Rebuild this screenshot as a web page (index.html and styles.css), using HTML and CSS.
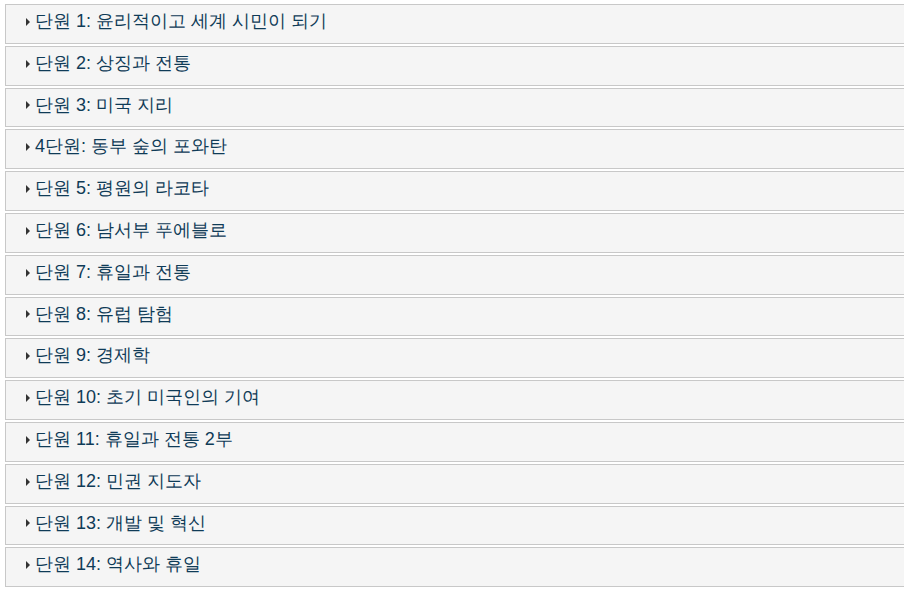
FILE: index.html
```html
<!DOCTYPE html>
<html lang="ko">
<head>
<meta charset="utf-8">
<title>단원</title>
<link rel="stylesheet" href="styles.css">
</head>
<body>
<div class="list">
  <details class="unit"><summary class="unit-title"><span class="arrow"></span>단원 1: 윤리적이고 세계 시민이 되기</summary></details>
  <details class="unit"><summary class="unit-title"><span class="arrow"></span>단원 2: 상징과 전통</summary></details>
  <details class="unit"><summary class="unit-title"><span class="arrow"></span>단원 3: 미국 지리</summary></details>
  <details class="unit"><summary class="unit-title"><span class="arrow"></span>4단원: 동부 숲의 포와탄</summary></details>
  <details class="unit"><summary class="unit-title"><span class="arrow"></span>단원 5: 평원의 라코타</summary></details>
  <details class="unit"><summary class="unit-title"><span class="arrow"></span>단원 6: 남서부 푸에블로</summary></details>
  <details class="unit"><summary class="unit-title"><span class="arrow"></span>단원 7: 휴일과 전통</summary></details>
  <details class="unit"><summary class="unit-title"><span class="arrow"></span>단원 8: 유럽 탐험</summary></details>
  <details class="unit"><summary class="unit-title"><span class="arrow"></span>단원 9: 경제학</summary></details>
  <details class="unit"><summary class="unit-title"><span class="arrow"></span>단원 10: 초기 미국인의 기여</summary></details>
  <details class="unit"><summary class="unit-title"><span class="arrow"></span>단원 11: 휴일과 전통 2부</summary></details>
  <details class="unit"><summary class="unit-title"><span class="arrow"></span>단원 12: 민권 지도자</summary></details>
  <details class="unit"><summary class="unit-title"><span class="arrow"></span>단원 13: 개발 및 혁신</summary></details>
  <details class="unit"><summary class="unit-title"><span class="arrow"></span>단원 14: 역사와 휴일</summary></details>
</div>
</body>
</html>
```

FILE: styles.css
```css
html {
  overflow: hidden;
  background: #ffffff;
}
body {
  margin: 0;
  padding: 4px 0 0 5px;
  font-family: "Liberation Sans", sans-serif;
}
.list {
  display: flex;
  flex-direction: column;
  gap: 2px;
  width: 960px;
}
.unit {
  border: 1px solid #c8c8c8;
  background: #f5f5f5;
}
.unit-title {
  list-style: none;
  display: flex;
  align-items: center;
  padding: 6px 0 11px 20px;
  line-height: 20.8px;
  font-size: 18px;
  color: #0f3b57;
  cursor: pointer;
}
.unit-title::-webkit-details-marker {
  display: none;
}
.arrow {
  width: 0;
  height: 0;
  border-left: 4px solid #333333;
  border-top: 4px solid transparent;
  border-bottom: 4px solid transparent;
  margin-right: 5px;
  margin-top: 1px;
}
```
